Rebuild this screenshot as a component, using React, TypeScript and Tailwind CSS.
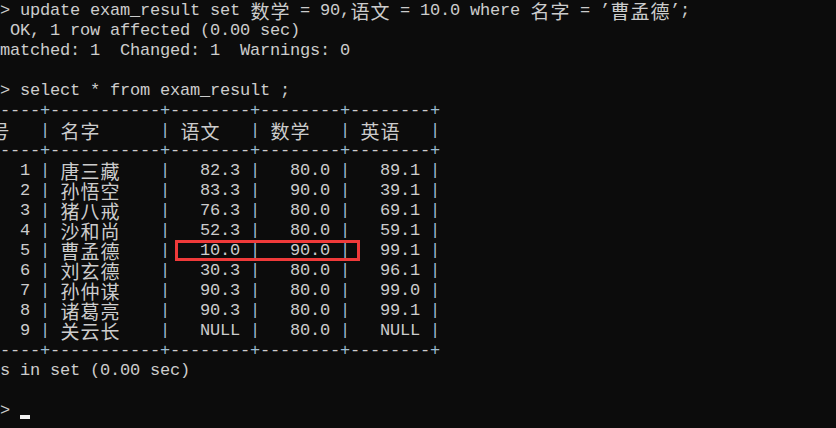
const mono = "font-['Liberation_Mono','DejaVu_Sans_Mono',monospace] text-[17px]";
const cjk = "font-['Noto_Sans_CJK_SC','Noto_Sans_CJK_JP',sans-serif] text-[19px]";

const isWide = (ch: string) => ch.charCodeAt(0) > 0x2e80 && ch !== "\u2019";

function Cell({ ch }: { ch: string }) {
  if (isWide(ch)) {
    return (
      <span className={`${cjk} w-[20px] h-[20px] shrink-0 leading-[20px] text-center`}>{ch}</span>
    );
  }
  const tint = ch === "|" || ch === "+" ? "text-[#9dbcd2]" : "";
  return (
    <span className={`${mono} ${tint} w-[10px] h-[20px] shrink-0 leading-[20px] text-center whitespace-pre`}>
      {ch}
    </span>
  );
}

function Line({ text = "", children }: { text?: string; children?: React.ReactNode }) {
  return (
    <div className="flex h-[20px] items-start">
      {children}
      {Array.from(text).map((ch, i) => (
        <Cell key={i} ch={ch} />
      ))}
    </div>
  );
}

const rows = [
  ["1", "唐三藏", "82.3", "80.0", "89.1"],
  ["2", "孙悟空", "83.3", "90.0", "39.1"],
  ["3", "猪八戒", "76.3", "80.0", "69.1"],
  ["4", "沙和尚", "52.3", "80.0", "59.1"],
  ["5", "曹孟德", "10.0", "90.0", "99.1"],
  ["6", "刘玄德", "30.3", "80.0", "96.1"],
  ["7", "孙仲谋", "90.3", "80.0", "99.0"],
  ["8", "诸葛亮", "90.3", "80.0", "99.1"],
  ["9", "关云长", "NULL", "80.0", "NULL"],
];

const border = "----+-----------+--------+--------+--------+";
const pad = (v: string) => v.padStart(7, " ");

export default function App() {
  return (
    <div className="relative w-[836px] h-[428px] overflow-hidden bg-[#0c0c0c] text-[#cccccc] pt-[1px]">
      <Line text={"> update exam_result set 数学 = 90,语文 = 10.0 where 名字 = \u2019曹孟德\u2019;"} />
      <Line text=" OK, 1 row affected (0.00 sec)" />
      <Line text="matched: 1  Changed: 1  Warnings: 0" />
      <Line />
      <Line text="> select * from exam_result ;" />
      <Line text={border} />
      <Line text="   | 名字      | 语文   | 数学   | 英语   |">
        <span className={`${cjk} w-[20px] h-[20px] shrink-0 leading-[20px] text-center ml-[-10px]`}>号</span>
      </Line>
      <Line text={border} />
      {rows.map(([id, name, a, b, c]) => (
        <Line key={id} text={`  ${id} | ${name}    |${pad(a)} |${pad(b)} |${pad(c)} |`} />
      ))}
      <Line text={border} />
      <Line text="s in set (0.00 sec)" />
      <Line />
      <Line text="> " />

      {/* cursor */}
      <div className="absolute left-[20px] top-[415px] w-[10px] h-[4px] bg-[#f2f2f2]" />

      {/* annotation box */}
      <div className="absolute left-[175px] top-[240px] w-[185px] h-[21px] border-[3px] border-[#f03a3a]" />
    </div>
  );
}
